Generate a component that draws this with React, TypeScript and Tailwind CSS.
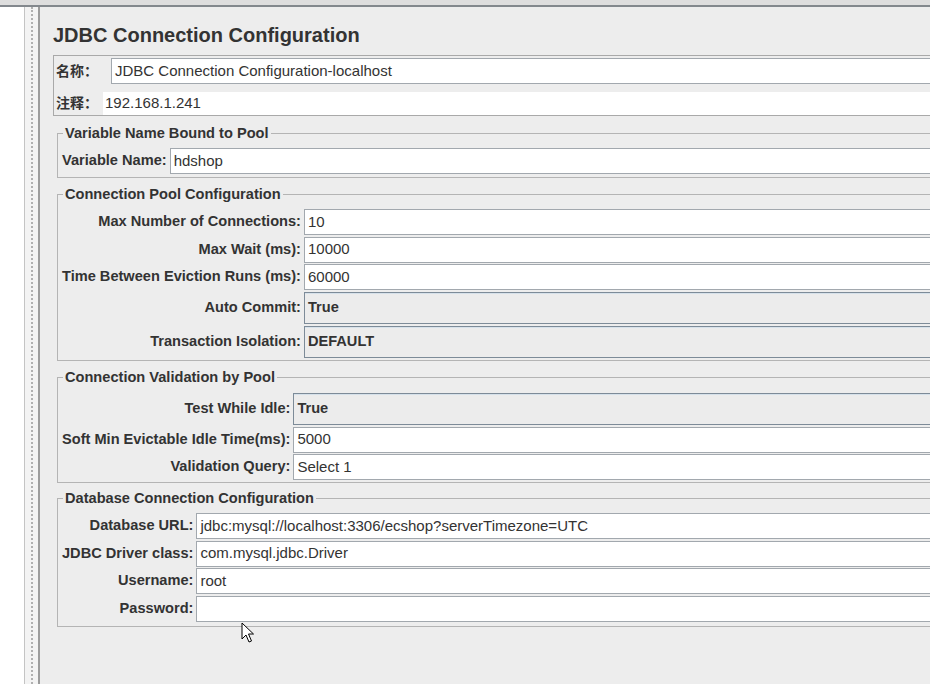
const poolRows = [
  { label: "Max Number of Connections:", value: "10" },
  { label: "Max Wait (ms):", value: "10000" },
  { label: "Time Between Eviction Runs (ms):", value: "60000" },
  { label: "Auto Commit:", value: "True", combo: true },
  { label: "Transaction Isolation:", value: "DEFAULT", combo: true },
];

const validationRows = [
  { label: "Test While Idle:", value: "True", combo: true },
  { label: "Soft Min Evictable Idle Time(ms):", value: "5000" },
  { label: "Validation Query:", value: "Select 1" },
];

const dbRows = [
  { label: "Database URL:", value: "jdbc:mysql://localhost:3306/ecshop?serverTimezone=UTC" },
  { label: "JDBC Driver class:", value: "com.mysql.jdbc.Driver" },
  { label: "Username:", value: "root" },
  { label: "Password:", value: "" },
];

type Row = { label: string; value: string; combo?: boolean };

function Field({ value }: { value: string }) {
  return (
    <div className="flex h-[26px] items-center border border-[#a2a8ae] bg-white pl-[3px] text-[15px] text-[#333]">
      {value}
    </div>
  );
}

function Combo({ value }: { value: string }) {
  return (
    <div className="flex h-[32px] items-center border border-[#7d8b98] bg-[#ececec] pl-[3px] text-[14.6px] font-bold text-[#333] shadow-[inset_0_1px_0_#d6e1ea]">
      {value}
    </div>
  );
}

function Group({ title, rows, className }: { title: string; rows: Row[]; className: string }) {
  return (
    <fieldset className={`ml-[4px] border border-[#b4b4b4] pl-[4px] ${className}`}>
      <legend className="ml-[1px] px-[2px] text-[14.6px] font-bold leading-[16px] text-[#333]">
        {title}
      </legend>
      <div className="grid grid-cols-[auto_1fr] items-center gap-x-[3px]">
        {rows.map((row, i) => {
          const gap = i > 0 ? (row.combo ? "mt-[2px]" : "mt-[1.5px]") : "";
          return (
            <div key={row.label} className="contents">
              <div className={`whitespace-nowrap text-right text-[14.6px] font-bold text-[#333] ${gap}`}>
                {row.label}
              </div>
              <div className={gap}>
                {row.combo ? <Combo value={row.value} /> : <Field value={row.value} />}
              </div>
            </div>
          );
        })}
      </div>
    </fieldset>
  );
}

export default function App() {
  return (
    <div className="relative flex h-[684px] w-[930px] flex-col overflow-hidden bg-white font-['Liberation_Sans',Arial,'Noto_Sans_CJK_SC',sans-serif]">
      <div className="h-[7px] shrink-0 border-b-2 border-[#83888d] bg-[#dedede]" />

      <div className="flex flex-1">
        <div className="w-[25px] shrink-0 border-r border-[#c4c4c4] bg-white" />
        <div className="flex w-[13px] shrink-0 justify-center bg-[#f3f3f3] pl-[1px]">
          <div className="h-full border-l-2 border-dotted border-[#b0b0b0]" />
        </div>
        <div className="w-[2px] shrink-0 bg-[#9c9c9c]" />

        <main className="flex-1 bg-[#ededed] pl-[13px] pt-[16px]">
          <div className="w-[895px]">
            <h1 className="text-[20px] font-bold leading-[24px] text-[#333]">
              JDBC Connection Configuration
            </h1>

            <div className="mt-[8px] border border-[#a9a9a9] pl-[2px] pt-[2px]">
              <div className="flex items-center">
                <span className="w-[55px] text-[14px] font-bold text-[#333]">名称：</span>
                <div className="flex-1">
                  <Field value="JDBC Connection Configuration-localhost" />
                </div>
              </div>
              <div className="mt-[8px] flex items-center">
                <span className="w-[47px] text-[14px] font-bold text-[#333]">注释：</span>
                <div className="flex h-[23px] flex-1 items-center bg-white pl-[2px] text-[15px] text-[#333]">
                  192.168.1.241
                </div>
              </div>
            </div>

            <Group
              title="Variable Name Bound to Pool"
              className="mt-[9px] pb-[3px] pt-[7px]"
              rows={[{ label: "Variable Name:", value: "hdshop" }]}
            />
            <Group title="Connection Pool Configuration" className="mt-[8px] pb-[2px] pt-[7px]" rows={poolRows} />
            <Group title="Connection Validation by Pool" className="mt-[8px] pb-[2px] pt-[8px]" rows={validationRows} />
            <Group title="Database Connection Configuration" className="mt-[7px] pb-[4px] pt-[7px]" rows={dbRows} />
          </div>
        </main>
      </div>

      <svg
        className="absolute left-[241px] top-[622px]"
        width="14"
        height="22"
        viewBox="0 0 14 22"
      >
        <path
          d="M1 1 L1 17 L5 13 L8 20 L10.5 19 L7.5 12 L12.5 12 Z"
          fill="#fff"
          stroke="#000"
          strokeWidth="1"
          strokeLinejoin="round"
        />
      </svg>
    </div>
  );
}
